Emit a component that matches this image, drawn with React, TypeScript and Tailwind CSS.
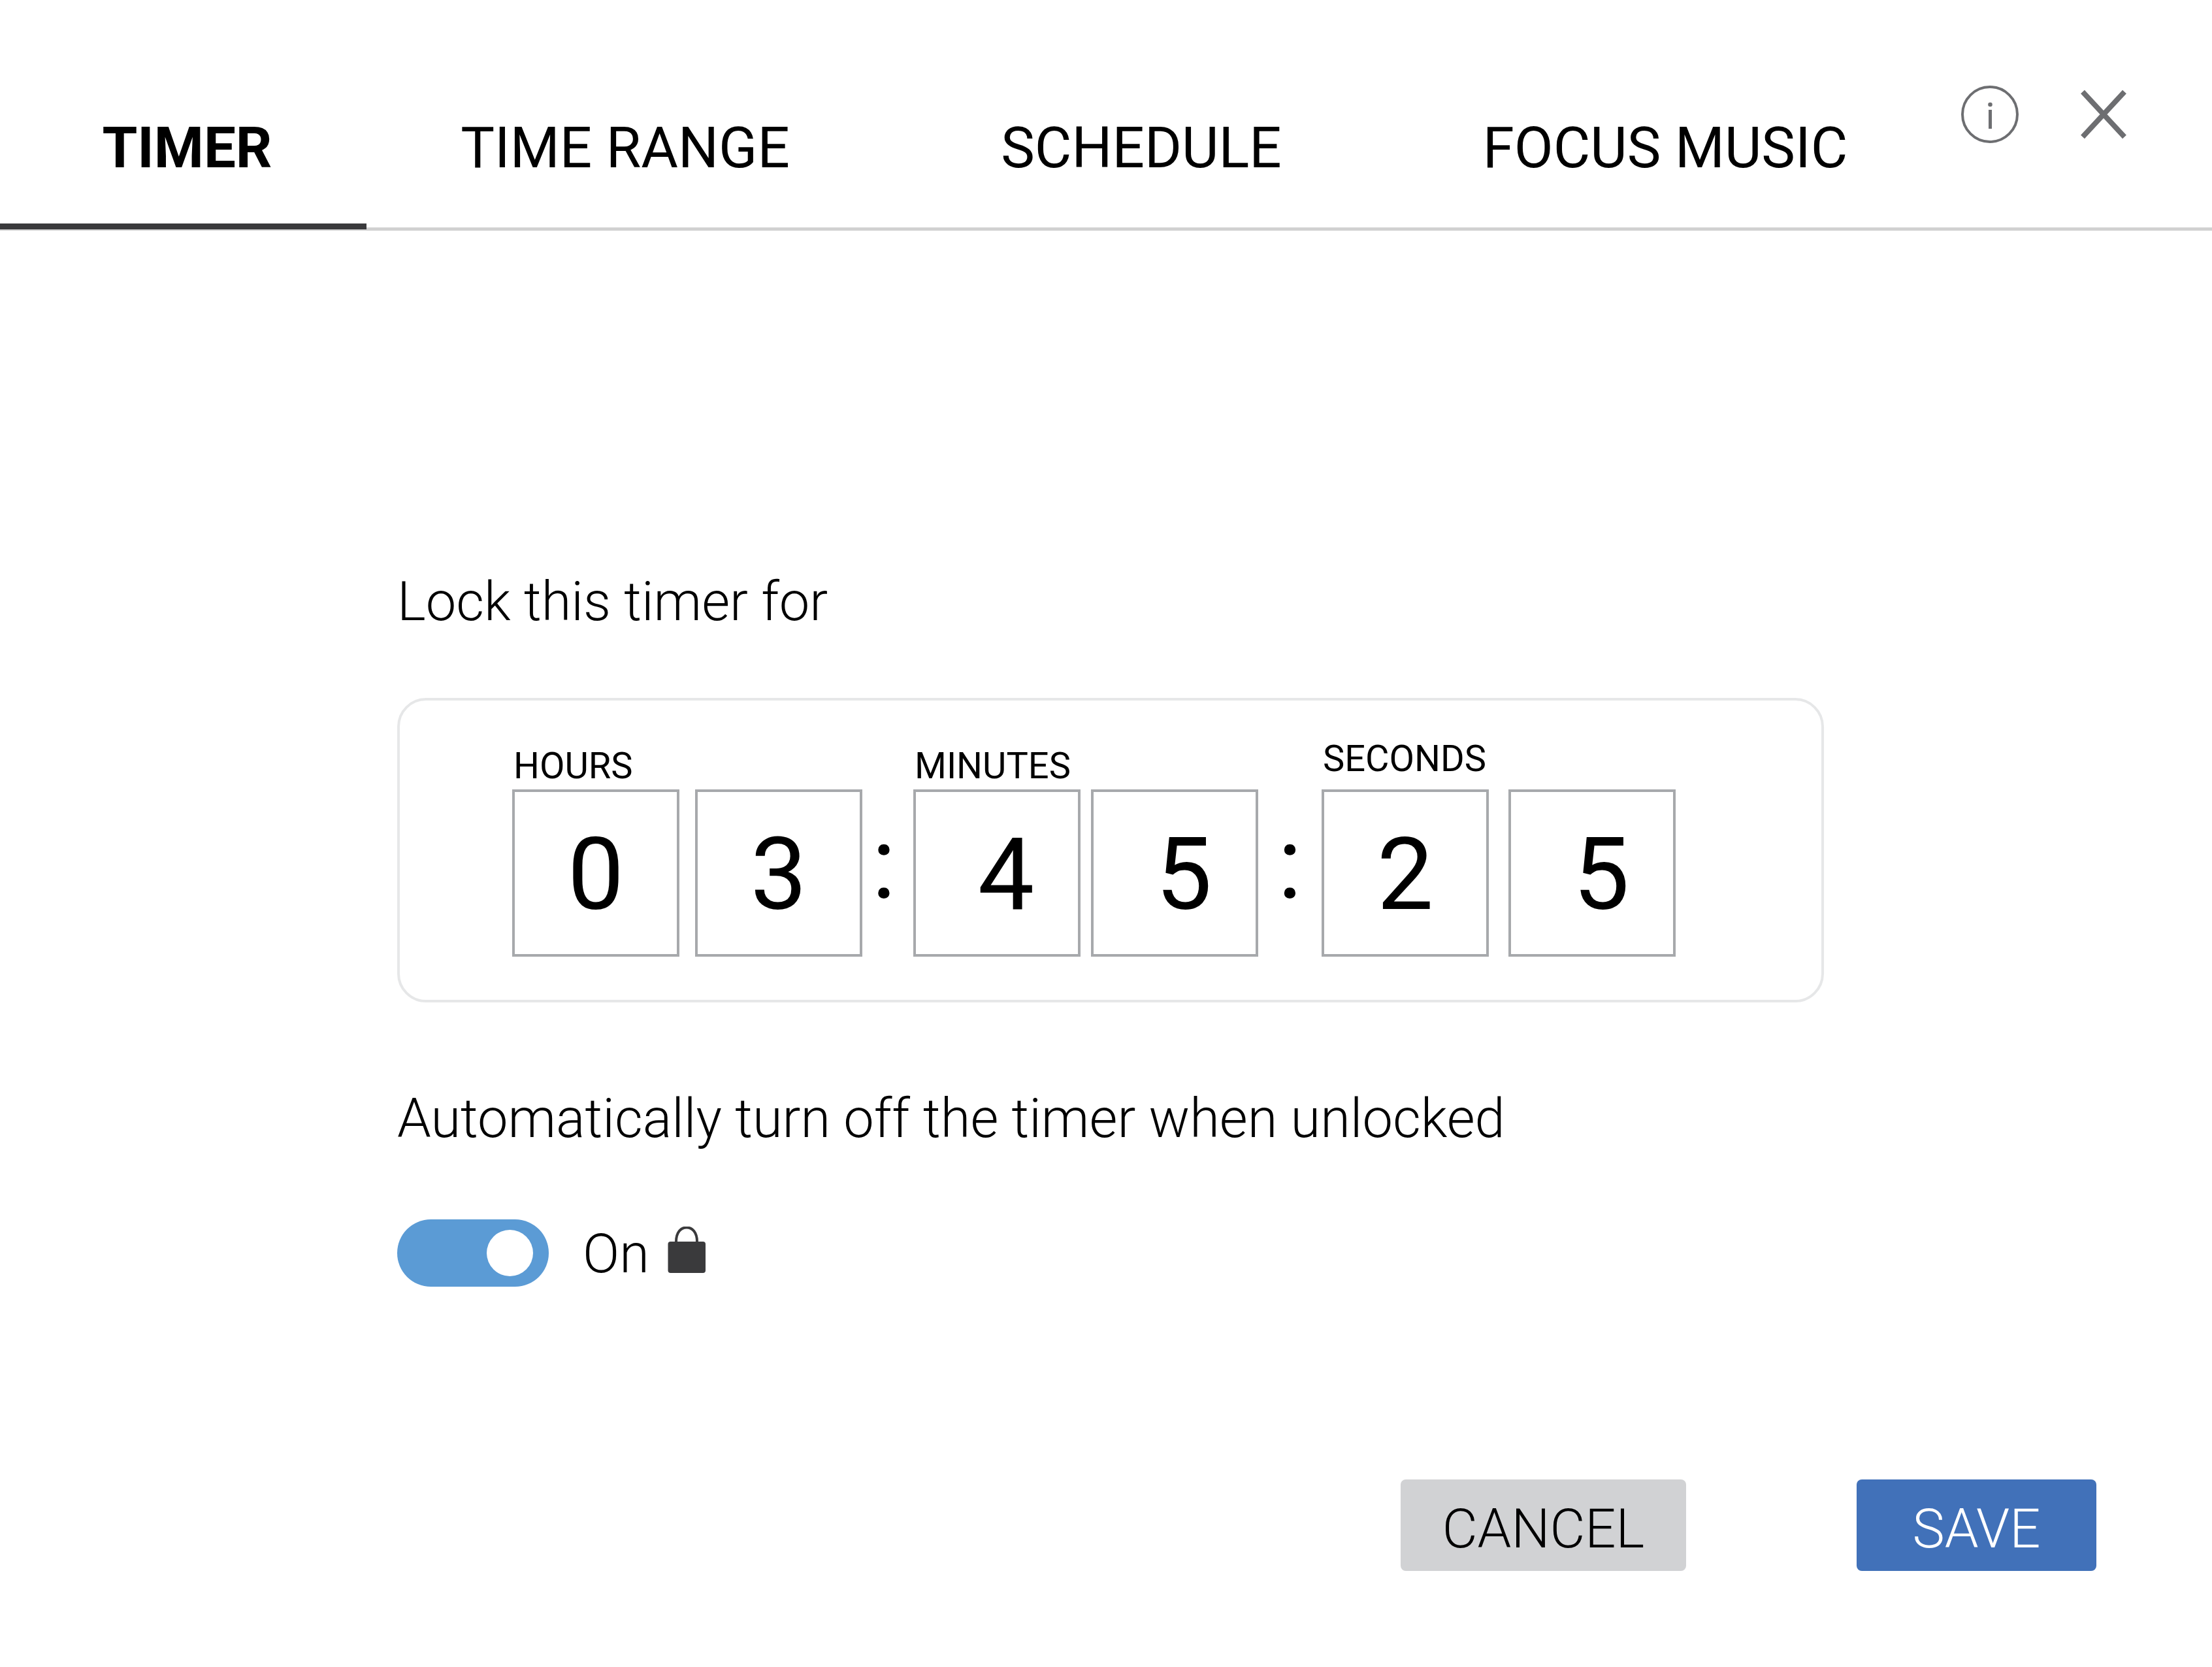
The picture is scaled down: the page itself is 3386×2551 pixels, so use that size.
import { useState } from "react";

const TABS = ["TIMER", "TIME RANGE", "SCHEDULE", "FOCUS MUSIC"];

type DigitProps = { id: string; label?: string; value: string; shifted?: boolean };

function Digit({ id, label, value, shifted }: DigitProps) {
  return (
    <input
      id={id}
      aria-label={label}
      type="text"
      inputMode="numeric"
      maxLength={1}
      defaultValue={value}
      className={`size-64 rounded-none border-4 border-[#a7a9ac] bg-white pt-1 text-center text-[154px] text-black outline-none ${
        shifted ? "pl-7" : ""
      }`}
    />
  );
}

function Colon({ width }: { width: string }) {
  return (
    <span aria-hidden="true" className={`h-64 text-center text-[154px] leading-[228px] ${width}`}>
      :
    </span>
  );
}

function InfoIcon() {
  return (
    <svg viewBox="0 0 88 88" className="size-[88px]" fill="none" aria-hidden="true">
      <circle cx="44" cy="44" r="42" stroke="#6d6e71" strokeWidth="4" />
      <circle cx="44.5" cy="29" r="3.3" fill="#6d6e71" />
      <rect x="42" y="37" width="5" height="29" fill="#6d6e71" />
    </svg>
  );
}

function CloseIcon() {
  return (
    <svg viewBox="0 0 70 76" className="h-[76px] w-[70px]" fill="none" aria-hidden="true">
      <path d="M3 3.5 67 72.5M67 3.5 3 72.5" stroke="#6d6e71" strokeWidth="8" />
    </svg>
  );
}

function LockIcon() {
  return (
    <svg viewBox="0 0 58 80" className="h-20 w-[58px]" aria-hidden="true">
      <path d="M13 25V23C13 9 20 1.5 29 1.5S45 9 45 23V25" fill="none" stroke="#3a3a3c" strokeWidth="4" />
      <rect x="0.5" y="23" width="57.5" height="48" rx="4" fill="#3a3a3c" />
    </svg>
  );
}

export default function App() {
  const [active, setActive] = useState("TIMER");
  const [on, setOn] = useState(true);

  return (
    <div className="flex min-h-screen flex-col bg-white font-['Roboto',sans-serif] text-black">
      <header className="grid grid-cols-[561fr_792fr_788fr_816fr_429fr] border-b-[5px] border-[#d1d1d1]">
        <nav className="col-span-4 grid grid-cols-subgrid">
          {TABS.map((tab) => (
            <button
              key={tab}
              type="button"
              onClick={() => setActive(tab)}
              className={`-mb-[3px] border-b-[9px] pt-[174px] pb-16 text-[87px] leading-[104px] whitespace-nowrap ${
                active === tab ? "border-[#3a3a3c] pl-3 font-bold" : "border-transparent"
              }`}
            >
              {tab}
            </button>
          ))}
        </nav>
        <div className="flex items-start gap-[95px] pt-[131px] pl-[45px]">
          <button type="button" aria-label="Information">
            <InfoIcon />
          </button>
          <button type="button" aria-label="Close" className="pt-1.5">
            <CloseIcon />
          </button>
        </div>
      </header>

      <main className="pt-[518px] pr-[594px] pl-[608px]">
        <h1 className="text-[83px] leading-[100px] font-light">Lock this timer for</h1>

        <section className="mt-[97px] flex items-end rounded-[44px] border-4 border-[#e6e7e8] pt-[57px] pb-[66px] pl-[172px]">
          <div>
            <label htmlFor="hours-tens" className="mb-1 block pl-0.5 text-[56px] leading-[64px]">
              HOURS
            </label>
            <div className="flex gap-6">
              <Digit id="hours-tens" value="0" />
              <Digit id="hours-ones" label="Hours, ones" value="3" />
            </div>
          </div>
          <Colon width="mr-3 w-[66px]" />
          <div>
            <label htmlFor="minutes-tens" className="mb-1 block pl-0.5 text-[56px] leading-[64px]">
              MINUTES
            </label>
            <div className="flex gap-4">
              <Digit id="minutes-tens" value="4" shifted />
              <Digit id="minutes-ones" label="Minutes, ones" value="5" shifted />
            </div>
          </div>
          <Colon width="w-[97px]" />
          <div>
            <label htmlFor="seconds-tens" className="mb-[15px] block pl-0.5 text-[56px] leading-[64px]">
              SECONDS
            </label>
            <div className="flex gap-[30px]">
              <Digit id="seconds-tens" value="2" />
              <Digit id="seconds-ones" label="Seconds, ones" value="5" shifted />
            </div>
          </div>
        </section>

        <p id="auto-off" className="mt-[128px] text-[83px] leading-[100px] font-light">
          Automatically turn off the timer when unlocked
        </p>

        <div className="mt-[103px] flex items-center">
          <input
            id="auto-off-switch"
            type="checkbox"
            role="switch"
            aria-describedby="auto-off"
            checked={on}
            onChange={(e) => setOn(e.target.checked)}
            className="flex h-[103px] w-[232px] appearance-none items-center rounded-full bg-gray-400 px-6 before:size-[71px] before:rounded-full before:bg-white checked:justify-end checked:bg-[#5b9bd5]"
          />
          <label htmlFor="auto-off-switch" className="ml-[52px] pt-1 text-[83px] leading-[100px] font-light">
            {on ? "On" : "Off"}
          </label>
          <span className="ml-7">
            <LockIcon />
          </span>
        </div>
      </main>

      <footer className="mt-auto flex justify-end gap-[261px] pr-[177px] pb-[147px]">
        <button
          type="button"
          className="h-[140px] w-[437px] rounded-lg bg-[#d1d2d4] pt-3 text-[83px] leading-[100px] font-light"
        >
          CANCEL
        </button>
        <button
          type="button"
          className="h-[140px] w-[367px] rounded-lg bg-[#4171b9] pt-3 text-[83px] leading-[100px] font-light text-white"
        >
          SAVE
        </button>
      </footer>
    </div>
  );
}
